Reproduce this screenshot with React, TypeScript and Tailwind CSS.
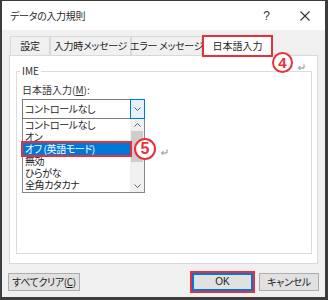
import React from 'react';

const ReturnMark = ({ className = '' }: { className?: string }) => (
    <svg className={className} width="8" height="7" viewBox="0 0 8 7" fill="none" stroke="#8a8a8a" strokeWidth="1">
        <path d="M7 0.5v3.5H1.5" />
        <path d="M3.5 2L1.5 4l2 2" />
    </svg>
);

const Circled = ({ n, className = '' }: { n: string; className?: string }) => (
    <div
        className={`absolute flex items-center justify-center rounded-full border-2 border-[#e8303a] bg-white text-[#e8303a] font-['Liberation_Sans',sans-serif] font-bold leading-none ${className}`}
    >
        {n}
    </div>
);

export default function App() {
    const tabs = [
        { label: '設定', w: 'w-[40px]' },
        { label: '入力時メッセージ', w: 'w-[81px]' },
        { label: 'エラー メッセージ', w: 'w-[71px]' },
    ];
    const items = ['コントロールなし', 'オン', 'オフ (英語モード)', '無効', 'ひらがな', '全角カタカナ'];

    return (
        <div className="w-[328px] h-[300px] bg-[#3c3c3c] pt-px pl-[2px] pr-[3px] pb-[3px] font-['Noto_Sans_CJK_JP',sans-serif] [font-feature-settings:'palt'] text-[10px] whitespace-nowrap text-[#1e1e1e]">
            <div className="relative w-[323px] h-[296px] bg-[#f0f0f0] flex flex-col">
                {/* Title bar */}
                <div className="h-[29px] bg-white flex items-center pl-[8px] pr-[15px] shrink-0">
                    <span className="text-[10px] text-[#2a2a2a] tracking-[-0.3px]">データの入力規則</span>
                    <div className="flex-1" />
                    <span className="text-[12px] text-[#333] font-['Liberation_Sans',sans-serif] mr-[30px]">?</span>
                    <svg width="10" height="10" viewBox="0 0 10 10" stroke="#333" strokeWidth="1.1">
                        <path d="M0.5 0.5l9 9M9.5 0.5l-9 9" />
                    </svg>
                </div>

                {/* Tabs */}
                <div className="h-[25px] flex items-end pl-[8px] shrink-0">
                    {tabs.map((t) => (
                        <div
                            key={t.label}
                            className={`${t.w} h-[19px] flex items-center justify-center border border-b-0 border-[#d9d9d9] bg-[#f0f0f0] leading-none tracking-[-0.3px]`}
                        >
                            {t.label}
                        </div>
                    ))}
                    <div className="w-[71px] h-[22px] flex items-center justify-center bg-white border-2 border-[#e8303a] leading-none translate-y-[2px] z-10">
                        日本語入力
                    </div>
                </div>

                {/* Panel */}
                <div className="ml-[7px] w-[309px] h-[209px] bg-white border border-[#d9d9d9] shrink-0">
                    <div className="relative mt-[15px] ml-[6px] w-[296px] h-[183px] border border-[#dcdcdc] pl-[5px]">
                        <span className="absolute -top-[8px] left-[3px] bg-white px-[2px] leading-[14px] text-[#333]">IME</span>
                        <div className="mt-[11px] leading-[14px] text-[#333]">
                            日本語入力(<span className="underline">M</span>):
                        </div>
                        <div className="mt-[2px] w-[123px] h-[20px] flex border border-[#7a7a7a] bg-white">
                            <div className="flex-1 flex items-center pl-[2px] leading-none tracking-[-0.4px]">コントロールなし</div>
                            <div className="w-[15px] -my-px -mr-px flex items-center justify-center bg-[#e5f1fb] border border-[#0078d7]">
                                <svg width="7" height="4" viewBox="0 0 7 4" fill="none" stroke="#606060" strokeWidth="1">
                                    <path d="M0.5 0.5l3 3 3-3" />
                                </svg>
                            </div>
                        </div>
                        <div className="w-[123px] h-[74px] flex border border-[#828790] border-t-0 bg-white">
                            <div className="flex-1 flex flex-col tracking-[-0.4px]">
                                {items.map((it, i) =>
                                    i === 2 ? (
                                        <div
                                            key={it}
                                            className="h-[12px] pl-[2px] leading-[12px] bg-[#0078d7] text-white outline-2 outline-[#e8303a] relative z-10"
                                        >
                                            {it}
                                        </div>
                                    ) : (
                                        <div key={it} className="h-[12px] pl-[2px] leading-[12px]">
                                            {it}
                                        </div>
                                    )
                                )}
                            </div>
                            <div className="w-[14px] bg-[#f0f0f0] flex flex-col items-center">
                                <div className="h-[12px] flex items-center justify-center">
                                    <svg width="7" height="4" viewBox="0 0 7 4" fill="none" stroke="#606060" strokeWidth="1">
                                        <path d="M0.5 3.5l3-3 3 3" />
                                    </svg>
                                </div>
                                <div className="w-[12px] h-[31px] bg-[#cdcdcd]" />
                                <div className="flex-1" />
                                <div className="h-[12px] flex items-center justify-center">
                                    <svg width="7" height="4" viewBox="0 0 7 4" fill="none" stroke="#606060" strokeWidth="1">
                                        <path d="M0.5 0.5l3 3 3-3" />
                                    </svg>
                                </div>
                            </div>
                        </div>
                    </div>
                </div>

                {/* Buttons */}
                <div className="mt-[9px] h-[18px] flex pl-[6px] pr-[6px] shrink-0">
                    <div className="w-[72px] h-[18px] flex items-center justify-center bg-[#e1e1e1] border border-[#adadad] leading-none tracking-[-0.4px]">
                        すべてクリア(<span className="underline">C</span>)
                    </div>
                    <div className="flex-1" />
                    <div className="w-[61px] h-[18px] flex items-center justify-center bg-[#e1e1e1] border-2 border-[#0078d7] outline-2 outline-[#e8303a] leading-none font-['Liberation_Sans',sans-serif]">
                        OK
                    </div>
                    <div className="ml-[6px] w-[60px] h-[18px] flex items-center justify-center bg-[#e1e1e1] border border-[#adadad] leading-none tracking-[-0.3px]">
                        キャンセル
                    </div>
                </div>

                {/* Annotations */}
                <Circled n="4" className="left-[270px] top-[51px] w-[21px] h-[21px] text-[15px]" />
                <ReturnMark className="absolute left-[295px] top-[63px]" />
                <Circled n="5" className="left-[132px] top-[137px] w-[22px] h-[22px] text-[16px]" />
                <ReturnMark className="absolute left-[158px] top-[148px]" />
            </div>
        </div>
    );
}
